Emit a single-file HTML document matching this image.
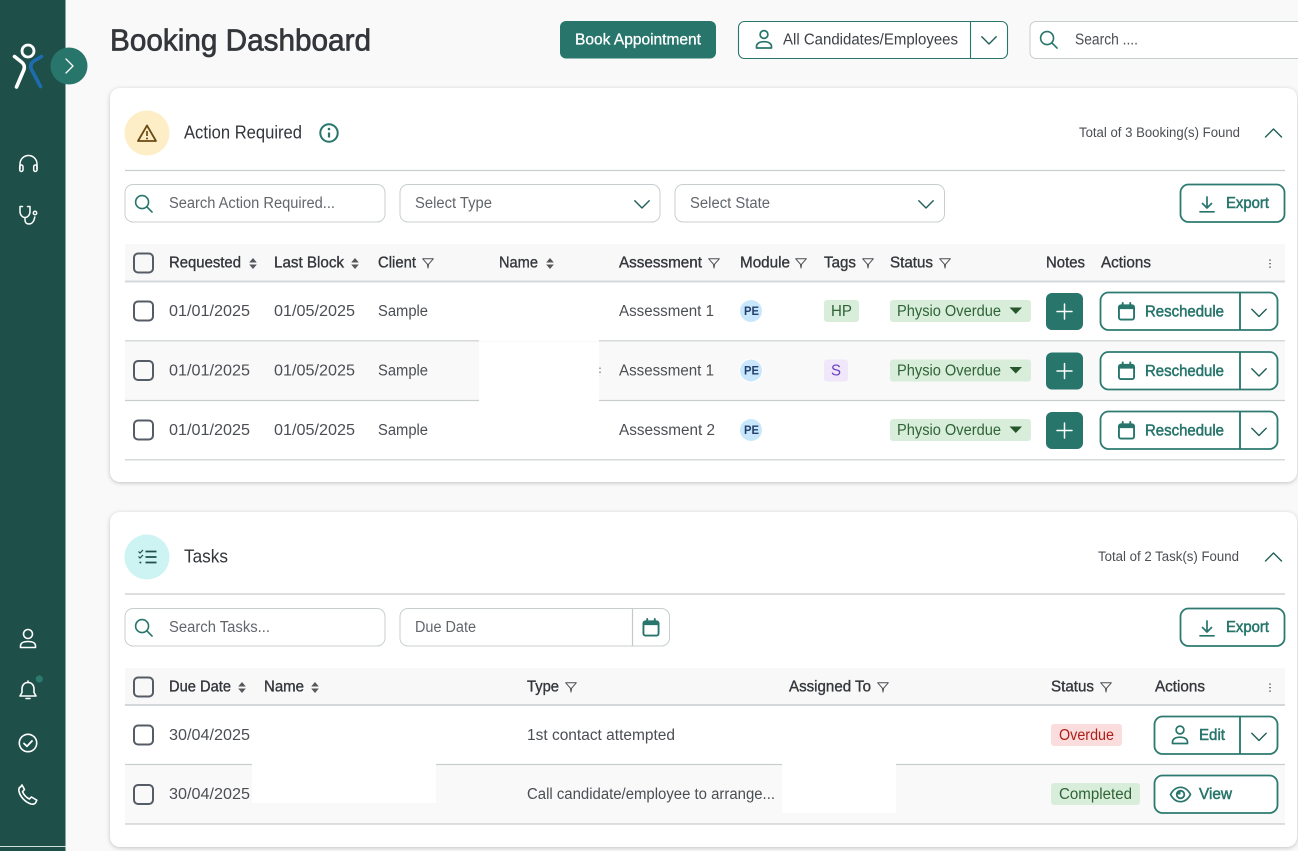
<!DOCTYPE html>
<html lang="en"><head><meta charset="utf-8"><title>Booking Dashboard</title>
<style>
html,body{margin:0;padding:0;width:1298px;height:851px;overflow:hidden;background:#f9f9f9}
svg{display:block;filter:blur(.25px)}
text{font-family:"Liberation Sans",sans-serif;font-size:15.5px;fill:#4b4e53;white-space:pre}
.h{fill:#33363b;stroke:#33363b;stroke-width:.35}
.b{fill:#27756b;stroke:#27756b;stroke-width:.5}
.p{fill:#62666b}
.i{fill:none;stroke:#27756b;stroke-width:1.7;stroke-linecap:round;stroke-linejoin:round}
.w{fill:none;stroke:#fff;stroke-width:1.8;stroke-linecap:round;stroke-linejoin:round}
.card{fill:#fff;filter:drop-shadow(0 1px 2px rgba(0,0,0,.22))}
.box{fill:#fff;stroke:#c8ced0;stroke-width:1}
.btn{fill:#fff;stroke:#2c7a70;stroke-width:1.8}
.cb{fill:#fff;stroke:#565c66;stroke-width:2}
.l{stroke:#c9cdce;stroke-width:1.2}
.lh{stroke:#d4d8da;stroke-width:2}
.st{fill:#2f6336}
</style></head><body>
<svg width="1298" height="851" viewBox="0 0 1298 851" xmlns="http://www.w3.org/2000/svg">
<defs>
<symbol id="search" viewBox="0 0 20 20" overflow="visible"><circle cx="8.5" cy="8.5" r="6.8" class="i"/><path d="M13.5 13.5L19 19" class="i"/></symbol>
<symbol id="chev" viewBox="0 0 16 9" overflow="visible"><path d="M.8.8L8 8l7.200-7.200" class="i" style="stroke:#1f5f57;stroke-width:1.400"/></symbol>
<symbol id="filt" viewBox="0 0 12 11" overflow="visible"><path d="M.7.8h10.600L6.600 6.200 6 10 5.400 6.200z" fill="none" stroke="#4b4e53" stroke-width="1" stroke-linejoin="round"/></symbol>
<symbol id="sort" viewBox="0 0 8 11" overflow="visible"><path d="M4 0l3.800 4.500H.2zM4 11L.2 6.500h7.600z" fill="#55585d"/></symbol>
<symbol id="cal" viewBox="0 0 18 19" overflow="visible"><rect x="1" y="3" width="16" height="15" rx="2" fill="none" stroke="#27756b" stroke-width="2"/><path d="M1 4.500a2 2 0 0 1 2-2h12a2 2 0 0 1 2 2V7H1z" fill="#27756b"/><path d="M5 .5v3M13 .5v3" stroke="#27756b" stroke-width="2" stroke-linecap="round"/></symbol>
<symbol id="pers" viewBox="0 0 18 20" overflow="visible"><circle cx="9" cy="5" r="3.900" fill="none" stroke="#27756b" stroke-width="1.700"/><path d="M1.500 18.500v-1.500c0-3 3-4.800 7.500-4.800s7.500 1.800 7.500 4.800v1.500z" fill="none" stroke="#27756b" stroke-width="1.700" stroke-linejoin="round"/></symbol>
<symbol id="exp" viewBox="0 0 16 17" overflow="visible"><path d="M8 1v10.500M3.500 7.500L8 12l4.500-4.500" class="i"/><path d="M1 15.800h14" class="i"/></symbol>
<g id="rs"><rect x="1100.500" y="0" width="177" height="37.500" rx="8" class="btn"/><path d="M1240 0v37.500" stroke="#27756b" stroke-width="1.800"/><use href="#cal" x="1118" y="10" width="17" height="18"/><text x="1145" y="24" class="b" textLength="79" lengthAdjust="spacingAndGlyphs">Reschedule</text><use href="#chev" x="1251" y="16" width="16" height="9"/></g>
<g id="pl"><rect x="1046" y="0" width="37" height="37" rx="6" fill="#27756b"/><path d="M1064.500 11v15M1057 18.500h15" class="w" style="stroke-width:1.500"/></g>
<g id="ph"><rect x="890" y="0" width="141" height="22" rx="3" fill="#d8eeda"/><text x="897" y="16" class="st" textLength="104" lengthAdjust="spacingAndGlyphs">Physio Overdue</text><path d="M1009.500 7.500h12.500l-6.250 6.500z" fill="#26562a"/></g>
<g id="pe"><circle cx="751" cy="0" r="11" fill="#c9e7fc"/><text x="744" y="4" style="font-size:11.500px;font-weight:700;fill:#23406f" textLength="15" lengthAdjust="spacingAndGlyphs">PE</text></g>
</defs>

<!-- sidebar -->
<rect width="65.500" height="851" fill="#1e4f49"/>
<path d="M0 846.500h65.500" stroke="#cfe0dc" stroke-width="1"/>
<circle cx="28" cy="51" r="6" fill="none" stroke="#fff" stroke-width="2.800"/>
<path d="M14.500 56.500l7 5.500c2.500 2 3.500 4 2.500 7.500L16.500 87" fill="none" stroke="#fff" stroke-width="3.600" stroke-linecap="round" stroke-linejoin="round"/>
<path d="M41.500 56.500l-7.500 4.500c-3.500 2.200-4 5-2.500 8.500L40.500 86.500" fill="none" stroke="#1e6cb0" stroke-width="3.600" stroke-linecap="round" stroke-linejoin="round"/>
<circle cx="69" cy="66" r="18.500" fill="#28756b"/>
<path d="M66 59l7 7-7 7" class="w" style="stroke-width:1.300"/>
<path d="M20 169v-5a8.500 8.500 0 0 1 17 0v5" class="w" style="stroke-width:1.500"/><rect x="19.700" y="165" width="3.300" height="6.500" rx="1.600" class="w" style="stroke-width:1.500"/><rect x="33.700" y="165" width="3.300" height="6.500" rx="1.600" class="w" style="stroke-width:1.500"/>
<path d="M22.500 206.500h-2.500v5c0 3.500 2.500 6 5 6s5-2.500 5-6v-5h-2.500M25 217.500v2.500c0 2.500 1.500 4 4 4s4-1.500 5-4l.8-3" class="w" style="stroke-width:1.500"/><circle cx="35" cy="213" r="1.700" class="w" style="stroke-width:1.500"/>
<circle cx="28" cy="634" r="4.500" class="w" style="stroke-width:1.600"/><path d="M20.500 647.500v-1.500c0-3 3-4.500 7.500-4.500s7.500 1.500 7.500 4.500v1.500z" class="w" style="stroke-width:1.600"/>
<path d="M28 682.500c-4 0-6 3-6 6.500v3.500l-2 3.500h16l-2-3.500V689c0-3.500-2-6.500-6-6.500zM28 681v1.500M26 698.500h4" class="w" style="stroke-width:1.600"/>
<circle cx="39.300" cy="679" r="3.600" fill="#2a7a6e"/>
<circle cx="28" cy="743" r="8.700" class="w" style="stroke-width:1.600"/><path d="M24 743.500l3 2.800 5-5.300" class="w"/>
<path d="M21 786.500c-2 1-2.500 3-2 5 1.500 5.500 6 10.500 12 12.500 2 .500 4 0 5-2l.8-1.800-5.300-3.200-2.200 2c-3-1.500-5.500-4.200-6.800-7.300l2-2.200-2.500-4.500z" class="w" style="stroke-width:1.600"/>

<!-- top bar -->
<text x="110" y="50.500" class="h" style="font-size:31px;stroke-width:.7" textLength="261" lengthAdjust="spacingAndGlyphs">Booking Dashboard</text>
<rect x="560" y="21" width="156" height="37.500" rx="6" fill="#27756b"/>
<text x="575" y="44.500" style="fill:#fff;stroke:#fff;stroke-width:.3" textLength="126" lengthAdjust="spacingAndGlyphs">Book Appointment</text>
<rect x="738.500" y="21.500" width="269" height="37" rx="6" fill="#fff" stroke="#27756b" stroke-width="1.100"/>
<path d="M970.500 21.500v37" stroke="#27756b" stroke-width="1.100"/>
<use href="#pers" x="755" y="29.500" width="18" height="20"/>
<text x="783" y="44.500" style="fill:#3d4045" textLength="175" lengthAdjust="spacingAndGlyphs">All Candidates/Employees</text>
<use href="#chev" x="981" y="36" width="16" height="9"/>
<rect x="1030" y="21.500" width="280" height="37" rx="6" class="box"/>
<use href="#search" x="1039" y="30" width="19" height="19"/>
<text x="1075" y="44.500" textLength="63" lengthAdjust="spacingAndGlyphs">Search ....</text>

<!-- Action Required card -->
<rect x="110" y="88" width="1187" height="394" rx="10" class="card"/>
<circle cx="147" cy="133" r="22.500" fill="#fdeec8"/>
<path d="M147 125.500l-9 15.500h18z" fill="none" stroke="#6b4a12" stroke-width="1.800" stroke-linejoin="round"/><path d="M147 131v5" stroke="#6b4a12" stroke-width="1.700"/><circle cx="147" cy="138.500" r="1" fill="#6b4a12"/>
<text x="184" y="138.500" style="font-size:18px;fill:#33363b" textLength="118" lengthAdjust="spacingAndGlyphs">Action Required</text>
<circle cx="329" cy="133" r="8.700" class="i" style="stroke-width:2"/><path d="M329 132.500v5" stroke="#27756b" stroke-width="2.200"/><circle cx="329" cy="129" r="1.300" fill="#27756b"/>
<text x="1079" y="137" style="font-size:13.500px" textLength="161" lengthAdjust="spacingAndGlyphs">Total of 3 Booking(s) Found</text>
<path d="M1265.500 137l8-8 8 8" class="i" style="stroke:#1f5f57;stroke-width:1.400"/>
<path d="M125 170.500h1160" class="l"/>

<rect x="125" y="184.500" width="260" height="37.500" rx="8" class="box"/>
<use href="#search" x="134" y="194" width="19" height="19"/>
<text x="169" y="208" class="p" textLength="166" lengthAdjust="spacingAndGlyphs">Search Action Required...</text>
<rect x="400" y="184.500" width="260" height="37.500" rx="8" class="box"/>
<text x="415" y="208" class="p" textLength="77" lengthAdjust="spacingAndGlyphs">Select Type</text>
<use href="#chev" x="634" y="200" width="16" height="9"/>
<rect x="675" y="184.500" width="269.500" height="37.500" rx="8" class="box"/>
<text x="690" y="208" class="p" textLength="80" lengthAdjust="spacingAndGlyphs">Select State</text>
<use href="#chev" x="918" y="200" width="16" height="9"/>
<rect x="1180.500" y="184.500" width="104" height="37.500" rx="8" class="btn"/>
<use href="#exp" x="1199" y="196" width="16" height="17"/>
<text x="1226" y="208" class="b" textLength="43" lengthAdjust="spacingAndGlyphs">Export</text>

<rect x="125" y="244" width="1160" height="37" fill="#f8f8f8"/>
<path d="M125 281.500h1160" class="lh"/>
<rect x="134" y="253.500" width="19" height="19" rx="4" class="cb" style="fill:#f8f8f8"/>
<g>
<text x="169" y="267.500" class="h" textLength="72" lengthAdjust="spacingAndGlyphs">Requested</text><use href="#sort" x="249" y="258" width="8" height="11"/>
<text x="274" y="267.500" class="h" textLength="70" lengthAdjust="spacingAndGlyphs">Last Block</text><use href="#sort" x="351" y="258" width="8" height="11"/>
<text x="378" y="267.500" class="h" textLength="38" lengthAdjust="spacingAndGlyphs">Client</text><use href="#filt" x="422" y="258" width="12" height="11"/>
<text x="499" y="267.500" class="h" textLength="39" lengthAdjust="spacingAndGlyphs">Name</text><use href="#sort" x="546" y="258" width="8" height="11"/>
<text x="619" y="267.500" class="h" textLength="83" lengthAdjust="spacingAndGlyphs">Assessment</text><use href="#filt" x="708" y="258" width="12" height="11"/>
<text x="740" y="267.500" class="h" textLength="50" lengthAdjust="spacingAndGlyphs">Module</text><use href="#filt" x="795" y="258" width="12" height="11"/>
<text x="824" y="267.500" class="h" textLength="32" lengthAdjust="spacingAndGlyphs">Tags</text><use href="#filt" x="862" y="258" width="12" height="11"/>
<text x="890" y="267.500" class="h" textLength="43" lengthAdjust="spacingAndGlyphs">Status</text><use href="#filt" x="939" y="258" width="12" height="11"/>
<text x="1046" y="267.500" class="h" textLength="39" lengthAdjust="spacingAndGlyphs">Notes</text>
<text x="1101" y="267.500" class="h" textLength="50" lengthAdjust="spacingAndGlyphs">Actions</text>
<path d="M1270 259.500v1.200M1270 263v1.200M1270 266.500v1.200" stroke="#55585d" stroke-width="1.600"/>
</g>

<!-- rows -->
<rect x="125" y="341" width="1160" height="59" fill="#f9f9f9"/>
<rect x="479" y="342" width="120" height="58" fill="#fff"/>
<path d="M125 340.800h354M599 340.800h686" class="l"/>
<path d="M125 400.500h354M599 400.500h686" class="l"/>
<path d="M125 459.800h1160" class="l"/>
<path d="M600 367.500v1.500M600 371.500v1.500" stroke="#777" stroke-width="1.200"/>

<rect x="134" y="301.500" width="19" height="19" rx="4" class="cb"/>
<text x="169" y="316" textLength="81" lengthAdjust="spacingAndGlyphs">01/01/2025</text>
<text x="274" y="316" textLength="81" lengthAdjust="spacingAndGlyphs">01/05/2025</text>
<text x="378" y="316" textLength="50" lengthAdjust="spacingAndGlyphs">Sample</text>
<text x="619" y="316" textLength="95" lengthAdjust="spacingAndGlyphs">Assessment 1</text>
<use href="#pe" y="311"/>
<rect x="824" y="300" width="35" height="22" rx="3" fill="#d8eeda"/><text x="831" y="316" class="st" textLength="21" lengthAdjust="spacingAndGlyphs">HP</text>
<use href="#ph" y="300"/>
<use href="#pl" y="293"/>
<use href="#rs" y="292.500"/>

<rect x="134" y="361" width="19" height="19" rx="4" class="cb" style="fill:#f9f9f9"/>
<text x="169" y="375.500" textLength="81" lengthAdjust="spacingAndGlyphs">01/01/2025</text>
<text x="274" y="375.500" textLength="81" lengthAdjust="spacingAndGlyphs">01/05/2025</text>
<text x="378" y="375.500" textLength="50" lengthAdjust="spacingAndGlyphs">Sample</text>
<text x="619" y="375.500" textLength="95" lengthAdjust="spacingAndGlyphs">Assessment 1</text>
<circle cx="751" cy="370.500" r="12" fill="#fff"/><use href="#pe" y="370.500"/>
<rect x="824" y="359.500" width="24" height="22" rx="3" fill="#f0e8fa"/><text x="831" y="375.500" style="fill:#6c3fc2" textLength="10" lengthAdjust="spacingAndGlyphs">S</text>
<use href="#ph" y="359.500"/>
<use href="#pl" y="352.500"/>
<use href="#rs" y="352"/>

<rect x="134" y="420.500" width="19" height="19" rx="4" class="cb"/>
<text x="169" y="435" textLength="81" lengthAdjust="spacingAndGlyphs">01/01/2025</text>
<text x="274" y="435" textLength="81" lengthAdjust="spacingAndGlyphs">01/05/2025</text>
<text x="378" y="435" textLength="50" lengthAdjust="spacingAndGlyphs">Sample</text>
<text x="619" y="435" textLength="96" lengthAdjust="spacingAndGlyphs">Assessment 2</text>
<use href="#pe" y="430"/>
<use href="#ph" y="419"/>
<use href="#pl" y="412"/>
<use href="#rs" y="411.500"/>

<!-- Tasks card -->
<rect x="110" y="512" width="1187" height="335" rx="10" class="card"/>
<circle cx="147" cy="557" r="22.500" fill="#cdf4f2"/>
<path d="M138.500 551.500l1.500 1.500 3-3M138.500 556.500l1.500 1.500 3-3" fill="none" stroke="#1e4f49" stroke-width="1.200"/><path d="M145.500 551.500h11M145.500 557h11M145.500 562.500h11" stroke="#1e4f49" stroke-width="1.700"/><path d="M139.500 562.500h1.800" stroke="#1e4f49" stroke-width="1.600"/>
<text x="184" y="562.500" style="font-size:18px;fill:#33363b" textLength="44" lengthAdjust="spacingAndGlyphs">Tasks</text>
<text x="1098" y="561" style="font-size:13.500px" textLength="141" lengthAdjust="spacingAndGlyphs">Total of 2 Task(s) Found</text>
<path d="M1265.500 561l8-8 8 8" class="i" style="stroke:#1f5f57;stroke-width:1.400"/>
<path d="M125 594h1160" class="l"/>

<rect x="125" y="608.500" width="260" height="37.500" rx="8" class="box"/>
<use href="#search" x="134" y="618" width="19" height="19"/>
<text x="169" y="632" class="p" textLength="101" lengthAdjust="spacingAndGlyphs">Search Tasks...</text>
<rect x="400" y="608.500" width="269.500" height="37.500" rx="8" class="box"/>
<path d="M632.500 608.500v37.500" stroke="#c3c9cb" stroke-width="1.200"/>
<text x="415" y="632" class="p" textLength="61" lengthAdjust="spacingAndGlyphs">Due Date</text>
<use href="#cal" x="642.500" y="618.500" width="17" height="18"/>
<rect x="1180.500" y="608.500" width="104" height="37.500" rx="8" class="btn"/>
<use href="#exp" x="1199" y="620" width="16" height="17"/>
<text x="1226" y="632" class="b" textLength="43" lengthAdjust="spacingAndGlyphs">Export</text>

<rect x="125" y="668" width="1160" height="37" fill="#f8f8f8"/>
<path d="M125 705h1160" class="lh"/>
<rect x="134" y="677.500" width="19" height="19" rx="4" class="cb" style="fill:#f8f8f8"/>
<text x="169" y="691.500" class="h" textLength="62" lengthAdjust="spacingAndGlyphs">Due Date</text><use href="#sort" x="238" y="682" width="8" height="11"/>
<text x="264" y="691.500" class="h" textLength="40" lengthAdjust="spacingAndGlyphs">Name</text><use href="#sort" x="311" y="682" width="8" height="11"/>
<text x="527" y="691.500" class="h" textLength="32" lengthAdjust="spacingAndGlyphs">Type</text><use href="#filt" x="565" y="682" width="12" height="11"/>
<text x="789" y="691.500" class="h" textLength="82" lengthAdjust="spacingAndGlyphs">Assigned To</text><use href="#filt" x="877" y="682" width="12" height="11"/>
<text x="1051" y="691.500" class="h" textLength="43" lengthAdjust="spacingAndGlyphs">Status</text><use href="#filt" x="1100" y="682" width="12" height="11"/>
<text x="1155" y="691.500" class="h" textLength="50" lengthAdjust="spacingAndGlyphs">Actions</text>
<path d="M1270 683.500v1.200M1270 687v1.200M1270 690.500v1.200" stroke="#55585d" stroke-width="1.600"/>

<rect x="125" y="765" width="1160" height="59" fill="#f9f9f9"/>
<rect x="252" y="765" width="184" height="38" fill="#fff"/>
<rect x="782" y="765" width="114" height="48" fill="#fff"/>
<path d="M125 764.500h127M436 764.500h346M896 764.500h389" class="l"/>
<path d="M125 824h1160" class="l"/>

<rect x="134" y="725.500" width="19" height="19" rx="4" class="cb"/>
<text x="169" y="740" textLength="81" lengthAdjust="spacingAndGlyphs">30/04/2025</text>
<text x="527" y="740" textLength="148" lengthAdjust="spacingAndGlyphs">1st contact attempted</text>
<rect x="1051" y="724" width="71" height="22" rx="3" fill="#fbdddd"/><text x="1059" y="740" style="fill:#ad2019" textLength="55" lengthAdjust="spacingAndGlyphs">Overdue</text>
<rect x="1154.500" y="716.500" width="123" height="37.500" rx="8" class="btn"/>
<path d="M1240 716.500v37.500" stroke="#27756b" stroke-width="1.800"/>
<use href="#pers" x="1171" y="725" width="18" height="20"/>
<text x="1199" y="740" class="b" textLength="26" lengthAdjust="spacingAndGlyphs">Edit</text>
<use href="#chev" x="1251" y="732.500" width="16" height="9"/>

<rect x="134" y="785" width="19" height="19" rx="4" class="cb" style="fill:#f9f9f9"/>
<text x="169" y="799" textLength="81" lengthAdjust="spacingAndGlyphs">30/04/2025</text>
<text x="527" y="799" textLength="248" lengthAdjust="spacingAndGlyphs">Call candidate/employee to arrange...</text>
<rect x="1051" y="783" width="89" height="22" rx="3" fill="#d8eeda"/><text x="1059" y="799" class="st" textLength="73" lengthAdjust="spacingAndGlyphs">Completed</text>
<rect x="1154.500" y="775.500" width="123" height="37.500" rx="8" class="btn"/>
<path d="M1170.500 794.500c2.500-4.800 6.300-7.200 10-7.200s7.500 2.400 10 7.200c-2.500 4.800-6.300 7.200-10 7.200s-7.500-2.400-10-7.200z" class="i"/><circle cx="1180.500" cy="794.500" r="3.800" fill="none" stroke="#27756b" stroke-width="1.800"/><path d="M1180.500 791a3.500 3.500 0 0 0-3.500 3.500h3.500z" fill="#27756b"/>
<text x="1199" y="799" class="b" textLength="33" lengthAdjust="spacingAndGlyphs">View</text>
</svg>
</body></html>
